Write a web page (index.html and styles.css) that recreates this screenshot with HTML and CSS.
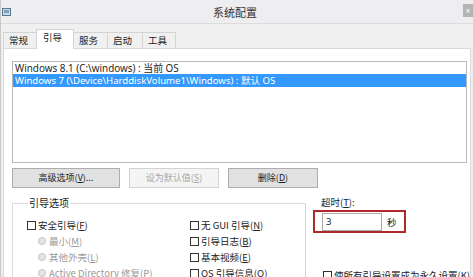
FILE: index.html
```html
<!DOCTYPE html>
<html lang="zh-CN">
<head>
<meta charset="utf-8">
<title>系统配置</title>
<link rel="stylesheet" href="styles.css">
</head>
<body>
<div class="window">
  <div class="titlebar">
    <span class="appicon">
      <svg width="9" height="8" viewBox="0 0 9 8"><rect x="0.5" y="0.5" width="8" height="7" fill="#c8d6e2" stroke="#5a7896"/><rect x="2" y="2" width="5" height="3" fill="#7fa2c2"/></svg>
    </span>
    <span class="title">系统配置</span>
    <span class="close">×</span>
  </div>
  <div class="tabs">
    <span class="tab">常规</span>
    <span class="tab active">引导</span>
    <span class="tab">服务</span>
    <span class="tab">启动</span>
    <span class="tab">工具</span>
  </div>
  <div class="panel">
    <div class="listbox">
      <div class="item">Windows 8.1 (C:\windows) : 当前 OS</div>
      <div class="item selected">Windows 7 (\Device\HarddiskVolume1\Windows) : 默认 OS</div>
    </div>
    <div class="buttons">
      <span class="btn wide">高级选项(<u>V</u>)...</span>
      <span class="btn disabled">设为默认值(<u>S</u>)</span>
      <span class="btn">删除(<u>D</u>)</span>
    </div>
    <div class="lower">
      <fieldset class="group">
        <legend>引导选项</legend>
        <div class="cols">
          <div class="col left">
            <div class="row"><span class="cb"></span>安全引导(<u>F</u>)</div>
            <div class="row sub dim"><span class="rb"></span>最小(<u>M</u>)</div>
            <div class="row sub dim"><span class="rb"></span>其他外壳(<u>L</u>)</div>
            <div class="row sub dim"><span class="rb"></span>Active Directory 修复(<u>P</u>)</div>
          </div>
          <div class="col right">
            <div class="row"><span class="cb"></span>无 GUI 引导(<u>N</u>)</div>
            <div class="row"><span class="cb"></span>引导日志(<u>B</u>)</div>
            <div class="row"><span class="cb"></span>基本视频(<u>E</u>)</div>
            <div class="row"><span class="cb"></span>OS 引导信息(<u>O</u>)</div>
          </div>
        </div>
      </fieldset>
      <div class="side">
        <div class="tlabel">超时(<u>T</u>):</div>
        <div class="highlight">
          <span class="input">3</span>
          <span class="unit">秒</span>
        </div>
        <div class="row perm"><span class="cb"></span>使所有引导设置成为永久设置(<u>K</u>)</div>
      </div>
    </div>
  </div>
</div>
</body>
</html>
```

FILE: styles.css
```css
* { box-sizing: border-box; }
html, body {
  margin: 0;
  padding: 0;
  width: 473px;
  height: 277px;
  overflow: hidden;
  background: #f0eff0;
  font-family: "Noto Sans", "Noto Sans CJK SC", sans-serif;
  font-size: 10px;
  color: #1e1e1e;
}
u { text-decoration: underline; text-underline-offset: 1px; }

.window {
  height: 277px;
  border-left: 1px solid #c9c9c9;
  display: flex;
  flex-direction: column;
}

.titlebar {
  height: 24px;
  flex: none;
  display: flex;
  align-items: center;
  background: #eeedef;
  border-bottom: 1px solid #dcdcdc;
}
.appicon { width: 9px; height: 8px; margin-left: 1px; display: flex; }
.title {
  flex: 1;
  text-align: center;
  font-family: "Noto Sans CJK SC", sans-serif;
  font-size: 11px;
  color: #333;
  padding-right: 4px;
}
.close {
  align-self: flex-start;
  margin-top: 4px;
  width: 10px;
  height: 13px;
  background: #b4b4b4;
  color: #fff;
  font-size: 8px;
  line-height: 13px;
  text-align: center;
}

.tabs {
  height: 24px;
  flex: none;
  display: flex;
  align-items: flex-end;
  padding-left: 2px;
  background: #f0f0f0;
}
.tab {
  height: 16px;
  padding: 0 0 0 5px;
  width: 34px;
  border: 1px solid #d4d4d4;
  border-bottom: none;
  margin-right: -1px;
  background: #f0f0f0;
  font-family: "Noto Sans CJK SC", sans-serif;
  font-size: 9.5px;
  line-height: 15px;
  color: #222;
}
.tab:nth-child(2) { width: 38px; }
.tab:nth-child(3) { width: 35px; }
.tab:nth-child(4) { width: 36px; }
.tab.active {
  background: #fff;
  padding-left: 6px;
  line-height: 15px;
  position: relative;
  z-index: 1;
  margin-bottom: -1px;
  height: 20px;
}

.panel {
  flex: 1;
  margin: 0 2px 0 2px;
  background: #fff;
  border: 1px solid #d9d9d9;
  border-bottom: none;
  padding: 12px 0 0 8px;
}

.listbox {
  width: 455px;
  height: 102px;
  border: 1px solid #b9b9b9;
}
.item {
  height: 12px;
  line-height: 12px;
  padding-left: 2px;
  font-size: 9.9px;
  white-space: nowrap;
}
.item.selected {
  background: #3399ff;
  color: #fff;
  height: 13px;
  line-height: 13px;
  font-size: 9.6px;
}

.buttons {
  display: flex;
  gap: 9px;
  margin-top: 5px;
}
.btn {
  width: 90px;
  height: 20px;
  border: 1px solid #adadad;
  background: #e1e1e1;
  text-align: center;
  line-height: 18px;
  font-family: "Noto Sans CJK SC", sans-serif;
  font-size: 9px;
  color: #222;
}
.btn.wide { width: 108px; }
.btn.disabled {
  background: #f4f4f4;
  border-color: #d2d2d2;
  color: #a6a6a6;
}

.lower {
  display: flex;
  margin-top: 9px;
}
.group {
  margin: 0;
  width: 305px;
  height: 90px;
  border: 1px solid #dcdcdc;
  border-right-color: #d0d0d0;
  padding: 8px 0 0 14px;
}
.group legend {
  padding: 0 1px;
  margin-left: 1px;
  font-family: "Noto Sans CJK SC", sans-serif;
  font-size: 10px;
  line-height: 12px;
  color: #222;
}
.cols { display: flex; }
.col.left { width: 163px; }
.row {
  height: 16px;
  display: flex;
  align-items: center;
  font-family: "Noto Sans CJK SC", sans-serif;
  font-size: 9.5px;
  color: #222;
  white-space: nowrap;
}
.row.sub { padding-left: 11px; }
.dim { color: #9a9a9a; }
.cb {
  width: 9px;
  height: 9px;
  border: 1px solid #333;
  background: #fff;
  margin-right: 2px;
  flex: none;
}
.rb {
  width: 8px;
  height: 8px;
  border-radius: 50%;
  border: 1px solid #c4c4c4;
  background: #e6e6e6;
  margin-right: 3px;
  flex: none;
}

.side {
  margin-left: 7px;
  display: flex;
  flex-direction: column;
  margin-top: -1px;
}
.tlabel {
  padding-left: 8px;
  font-family: "Noto Sans CJK SC", sans-serif;
  font-size: 9.5px;
  line-height: 12px;
  color: #222;
}
.highlight {
  margin-top: 2px;
  width: 93px;
  height: 23px;
  border: 2px solid #b0282c;
  display: flex;
  align-items: center;
  padding-left: 7px;
}
.input {
  width: 60px;
  height: 18px;
  border: 1px solid #a9a9a9;
  padding-left: 3px;
  line-height: 16px;
  font-size: 9.5px;
}
.unit {
  margin-left: 5px;
  font-family: "Noto Sans CJK SC", sans-serif;
  font-size: 9.5px;
}
.row.perm {
  margin-top: 34px;
  padding-left: 10px;
}
```
